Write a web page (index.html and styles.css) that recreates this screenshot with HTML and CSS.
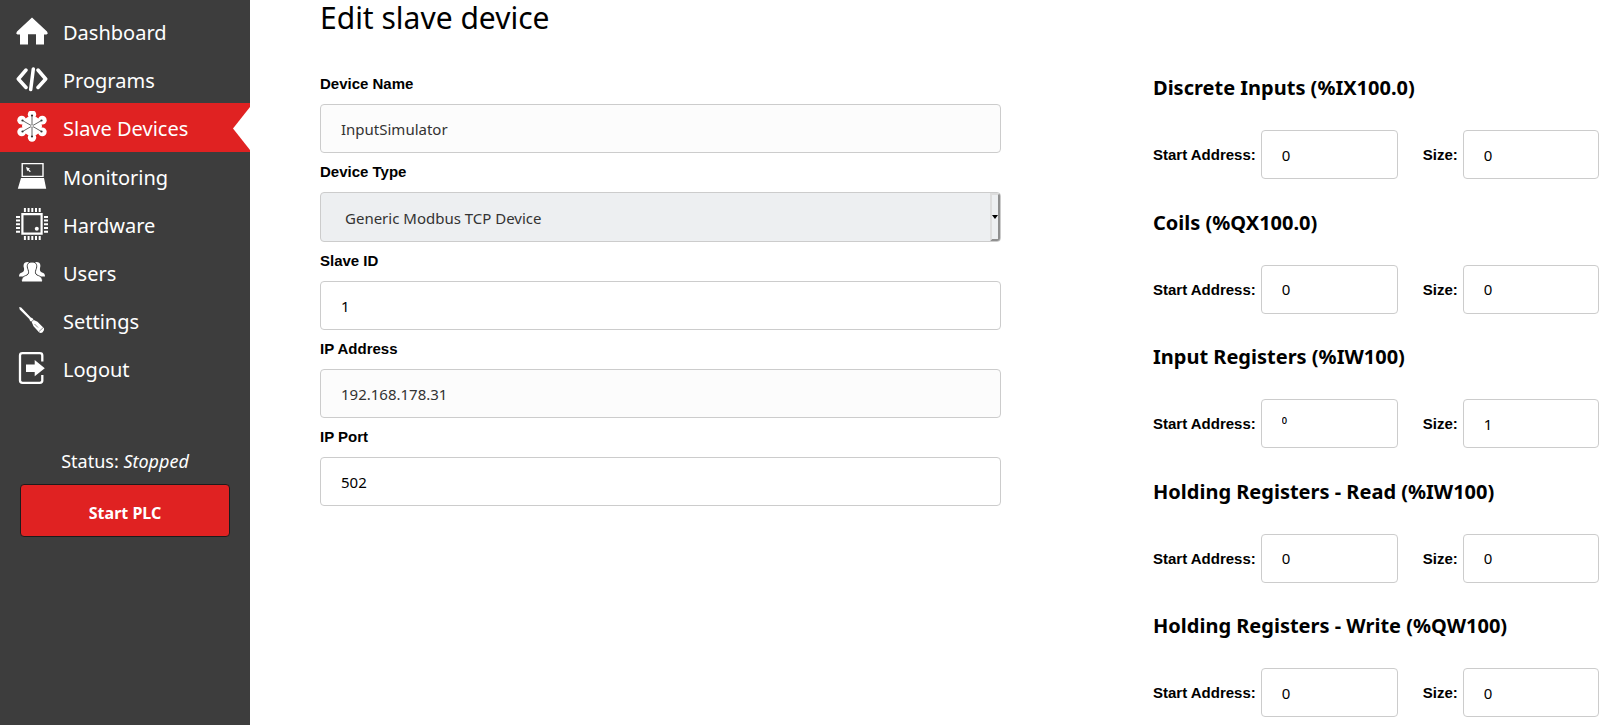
FILE: index.html
```html
<!DOCTYPE html>
<html lang="en">
<head>
<meta charset="utf-8">
<title>Edit slave device</title>
<link rel="stylesheet" href="styles.css">
</head>
<body>
<div class="page">
  <aside class="sidebar">
    <nav class="menu">
      <a class="menu-item" href="#"><svg class="icon" viewBox="0 0 32 32"><path d="M16 2.600 31 16.600 31.800 18.400 30.500 19.500H28V29.600H20V19.300H12V29.600H4V19.500H1.500L.200 18.400 1 16.600Z"/></svg>Dashboard</a>
      <a class="menu-item" href="#"><svg class="icon line" viewBox="0 0 32 32"><path d="M10 7 2.300 16 10 24.500M22 7 29.700 16 22 24.500M17.300 6 14.700 26.500"/></svg>Programs</a>
      <a class="menu-item active" href="#"><svg class="icon" viewBox="0 0 32 32"><circle cx="16" cy="15" r="10"/><circle cx="16" cy="3.500" r="4.200"/><circle cx="16" cy="26.500" r="4.200"/><circle cx="5.700" cy="9.200" r="4.400"/><circle cx="26.300" cy="9.200" r="4.400"/><circle cx="5.700" cy="20.800" r="4.400"/><circle cx="26.300" cy="20.800" r="4.400"/><path class="spokes" d="M16 4.500V25.500M6.500 9.500 25.500 20.500M25.500 9.500 6.500 20.500"/><g class="dots"><circle cx="16" cy="4.500" r="1.100"/><circle cx="16" cy="25.500" r="1.100"/><circle cx="6.500" cy="9.500" r="1.100"/><circle cx="25.500" cy="20.500" r="1.100"/><circle cx="25.500" cy="9.500" r="1.100"/><circle cx="6.500" cy="20.500" r="1.100"/></g><circle class="hub" cx="16" cy="15" r="1.600"/></svg>Slave Devices</a>
      <a class="menu-item" href="#"><svg class="icon" viewBox="0 0 32 32"><path fill-rule="evenodd" d="M5.500 3H27.700V17H5.500ZM6.900 4.300V15.700H26.300V4.300Z"/><path d="M10 7 14 8.400 12.800 9.200 14.800 11.300 13.900 12.200 12 10.200 11.200 11.300ZM5 18H28L30.200 28.700H1.800Z"/></svg>Monitoring</a>
      <a class="menu-item" href="#"><svg class="icon" viewBox="0 0 32 32"><path fill-rule="evenodd" d="M5.300 5H26.700V26.700H5.300ZM7.500 7.200V24.500H24.500V7.200Z"/><circle cx="20.800" cy="20.800" r="2"/><path class="pins" d="M8.900 0V4M12.600 0V4M16.300 0V4M20 0V4M23.700 0V4M8.900 28V32M12.600 28V32M16.300 28V32M20 28V32M23.700 28V32M0 8.900H4M0 12.600H4M0 16.300H4M0 20H4M0 23.700H4M28 8.900H32M28 12.600H32M28 16.300H32M28 20H32M28 23.700H32"/></svg>Hardware</a>
      <a class="menu-item" href="#"><svg class="icon" viewBox="0 0 32 32"><path d="M14 6.500C9 4.500 6.500 8 8 12 8.300 14.500 8 15.500 6 16.500 4 17.300 3 18 3 20.500H14ZM18 6.500C23 4.500 25.500 8 24 12 23.700 14.500 24 15.500 26 16.500 28 17.300 29 18 29 20.500H18Z"/><path class="cut" d="M16 6C11 6 10.500 10 12 13.500 13 16 12.800 18 11 19 7 20.500 5.500 21.500 5.500 26H26.500C26.500 21.500 25 20.500 21 19 19.200 18 19 16 20 13.500 21.500 10 21 6 16 6Z"/></svg>Users</a>
      <a class="menu-item" href="#"><svg class="icon" viewBox="0 0 32 32"><path d="M3.200 3 5.200 3.600 14.800 13.400 16.500 14.200 17.800 16 21.500 17.800 28 24.300Q28.700 26.500 26.700 28.300 24.800 29.500 23 28.300L17.500 22.300 15.800 18.200 14 16.800 13.300 15.100 3.700 5.400Z"/><path class="shade" d="M15 18 18 15.500M23 27.500 27.300 23.500M18.500 20 22 23.500"/></svg>Settings</a>
      <a class="menu-item" href="#"><svg class="icon" viewBox="0 0 32 32"><path class="frame" d="M26.300 9.500V3.500Q26.300 1.200 23.800 1.200H6.500Q4 1.200 4 3.500V28.500Q4 30.800 6.500 30.800H23.800Q26.300 30.800 26.300 28.500V23"/><path d="M10 12.500H18.700V8L28.800 16.300 18.700 24.300V20H10Z"/></svg>Logout</a>
    </nav>
    <p class="status">Status: <em>Stopped</em></p>
    <button class="start" type="button">Start PLC</button>
  </aside>
  <main class="content">
    <form class="device">
      <h1 class="title">Edit slave device</h1>
      <label class="label" for="name">Device Name</label>
      <input class="field muted" id="name" value="InputSimulator">
      <label class="label" for="type">Device Type</label>
      <div class="select-box"><select class="field select" id="type"><option>Generic Modbus TCP Device</option></select></div>
      <label class="label" for="slave">Slave ID</label>
      <input class="field" id="slave" value="1">
      <label class="label" for="ip">IP Address</label>
      <input class="field muted" id="ip" value="192.168.178.31">
      <label class="label" for="port">IP Port</label>
      <input class="field" id="port" value="502">
    </form>
    <form class="registers">
      <section class="group">
        <h2 class="heading">Discrete Inputs (%IX100.0)</h2>
        <div class="row"><label for="di-s">Start Address:</label><input class="field" id="di-s" value="0"><label class="size" for="di-n">Size:</label><input class="field" id="di-n" value="0"></div>
      </section>
      <section class="group">
        <h2 class="heading">Coils (%QX100.0)</h2>
        <div class="row"><label for="co-s">Start Address:</label><input class="field" id="co-s" value="0"><label class="size" for="co-n">Size:</label><input class="field" id="co-n" value="0"></div>
      </section>
      <section class="group">
        <h2 class="heading">Input Registers (%IW100)</h2>
        <div class="row"><label for="ir-s">Start Address:</label><input class="field" id="ir-s" value="⁰"><label class="size" for="ir-n">Size:</label><input class="field" id="ir-n" value="1"></div>
      </section>
      <section class="group">
        <h2 class="heading">Holding Registers - Read (%IW100)</h2>
        <div class="row"><label for="hr-s">Start Address:</label><input class="field" id="hr-s" value="0"><label class="size" for="hr-n">Size:</label><input class="field" id="hr-n" value="0"></div>
      </section>
      <section class="group">
        <h2 class="heading">Holding Registers - Write (%QW100)</h2>
        <div class="row"><label for="hw-s">Start Address:</label><input class="field" id="hw-s" value="0"><label class="size" for="hw-n">Size:</label><input class="field" id="hw-n" value="0"></div>
      </section>
    </form>
  </main>
</div>
</body>
</html>
```
FILE: styles.css
```css
*,
*::before,
*::after {
  box-sizing: border-box;
}

body {
  margin: 0;
  background: #fff;
  color: #000;
  font-family: "Noto Sans", sans-serif;
}

.page {
  display: flex;
  min-height: 100vh;
}

/* Sidebar */
.sidebar {
  flex: 0 0 250px;
  padding-top: 7px;
  background: #3d3d3d;
  color: #fff;
}

.menu {
  display: flex;
  flex-direction: column;
}

.menu-item {
  display: flex;
  align-items: flex-start;
  gap: 15px;
  height: 48px;
  padding: 8px 16px;
  color: #fff;
  font-size: 20px;
  line-height: 36px;
  text-decoration: none;
}

.menu-item.active {
  position: relative;
  height: 49px;
  background: #e02222;
}

.menu-item.active::after {
  content: "";
  position: absolute;
  top: 4px;
  right: 0;
  width: 17px;
  height: 43px;
  background: #fff;
  clip-path: polygon(100% 0, 0 50%, 100% 100%);
}

.icon {
  flex: none;
  width: 32px;
  height: 32px;
  fill: #fff;
}

.line {
  fill: none;
  stroke: #fff;
  stroke-width: 3.5;
  stroke-linecap: round;
  stroke-linejoin: round;
}

.spokes {
  stroke: #666;
  stroke-width: 1;
}

.dots {
  fill: #333;
}

.hub {
  fill: #ddd;
  stroke: #999;
  stroke-width: 0.6;
}

.pins {
  stroke: #fff;
  stroke-width: 2;
}

.cut {
  stroke: #3d3d3d;
  stroke-width: 1;
}

.shade {
  stroke: #3d3d3d;
  stroke-width: 0.6;
}

.frame {
  fill: none;
  stroke: #fff;
  stroke-width: 2.3;
}

.status {
  margin: 56px 20px 10px;
  font-size: 18px;
  line-height: 26px;
  text-align: center;
}

.start {
  display: block;
  width: 210px;
  height: 53px;
  margin: 0 auto;
  padding: 4px 8px 0;
  border: 1px solid #1c1c1c;
  border-radius: 4px;
  background: #e02222;
  color: #fff;
  font: bold 16px "Noto Sans", sans-serif;
}

/* Main area */
.content {
  display: flex;
  flex: 1;
  gap: 152px;
  padding: 0 5px 0 70px;
}

.device {
  flex: 1;
  min-width: 0;
}

.title {
  margin: 0 0 33px;
  font-size: 30px;
  font-weight: normal;
  line-height: 36px;
}

.label {
  display: block;
  margin: 4px 0 6px;
  font: bold 15px/29px "Liberation Sans", Arial, sans-serif;
}

.field {
  display: block;
  width: 100%;
  min-width: 0;
  height: 49px;
  padding: 0 20px;
  border: 1px solid #ccc;
  border-radius: 4px;
  background: #fff;
  color: #000;
  font: 15px "Noto Sans", sans-serif;
}

.muted {
  background: #fcfcfc;
  color: #333;
}

.select-box {
  position: relative;
}

.select {
  height: 50px;
  padding: 2px 24px 0;
  appearance: none;
  background: #edeff1;
  color: #333;
}

.select-box::before {
  content: "";
  position: absolute;
  top: 1px;
  right: 1px;
  bottom: 1px;
  width: 10px;
  border: 2px solid #8f8f8f;
  border-top-color: #ddd;
  border-left-color: #ddd;
  border-radius: 0 3px 3px 0;
  pointer-events: none;
}

.select-box::after {
  content: "";
  position: absolute;
  top: 23px;
  right: 3px;
  width: 6px;
  height: 4px;
  background: #000;
  clip-path: polygon(0 0, 100% 0, 50% 100%);
  pointer-events: none;
}

.registers {
  display: flex;
  flex: 0 0 446px;
  flex-direction: column;
  justify-content: space-between;
  padding: 73px 0 8px;
}

.heading {
  margin: 0 0 27px;
  font-size: 20px;
  line-height: 30px;
}

.row {
  display: grid;
  grid-template-columns: auto 137px auto 1fr;
  align-items: center;
  column-gap: 5px;
  font: bold 15px "Liberation Sans", Arial, sans-serif;
}

.size {
  padding-left: 20px;
}
```
